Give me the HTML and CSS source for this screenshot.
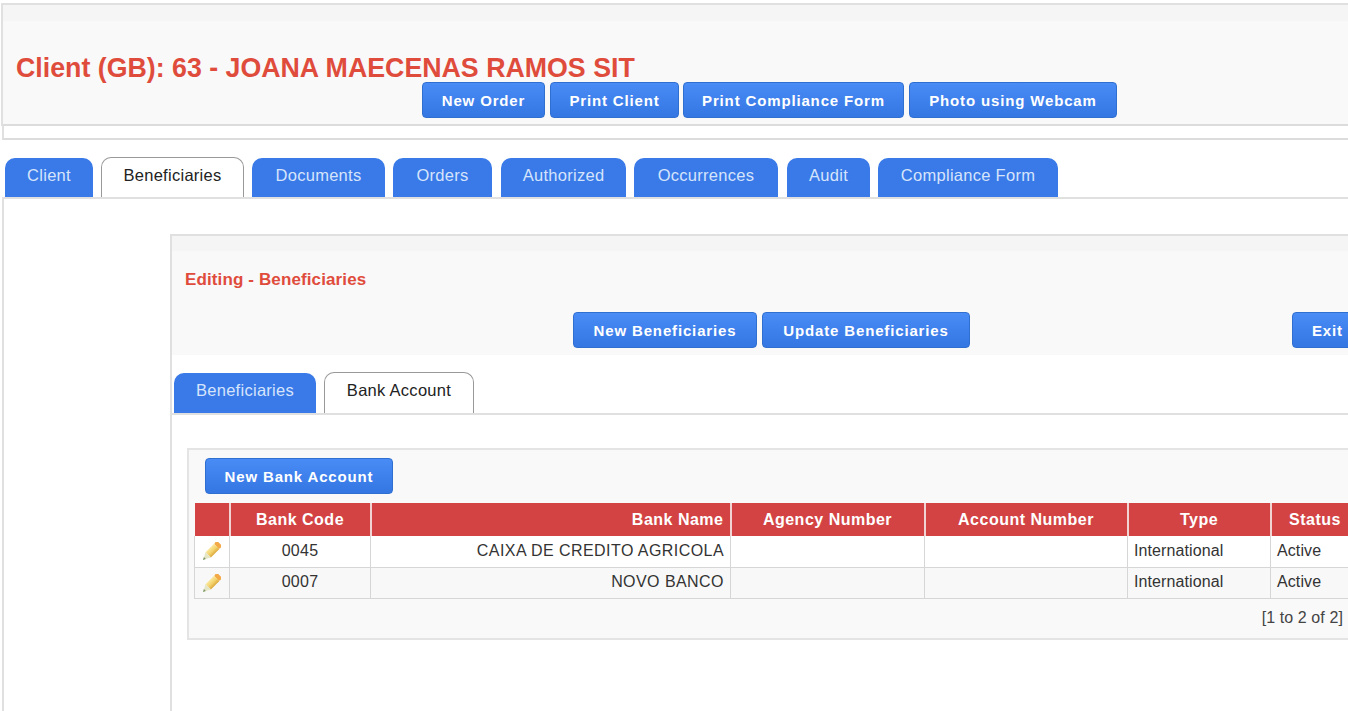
FILE: index.html
```html
<!DOCTYPE html>
<html lang="en">
<head>
<meta charset="utf-8">
<title>Client</title>
<link rel="stylesheet" href="styles.css">
</head>
<body>
<svg class="defs" width="0" height="0" aria-hidden="true">
  <defs>
    <linearGradient id="pbody" x1="0" y1="0" x2="1" y2="0">
      <stop offset="0" stop-color="#fbe9a0"/>
      <stop offset=".55" stop-color="#f3d26a"/>
      <stop offset="1" stop-color="#dca93c"/>
    </linearGradient>
    <symbol id="pencil" viewBox="0 0 20 20">
      <g transform="rotate(45 10 10)">
        <rect x="6.2" y="-2.2" width="7.6" height="4.4" rx="1.8" fill="#f3a948"/>
        <rect x="6.2" y="2" width="7.6" height="12" fill="url(#pbody)"/>
        <path d="M6.2 14h7.6L10 21z" fill="#e4e6c6"/>
        <path d="M8.6 18.6h2.8L10 21.4z" fill="#7f9a66"/>
      </g>
    </symbol>
  </defs>
</svg>
<div class="page">
  <section class="panel main-panel">
    <div class="panel-bar"></div>
    <div class="panel-head main-head">
      <h1 class="client-title">Client (GB): 63 - JOANA MAECENAS RAMOS SIT</h1>
      <div class="toolbar main-toolbar">
        <button class="btn btn-order">New Order</button>
        <button class="btn btn-print">Print Client</button>
        <button class="btn btn-form">Print Compliance Form</button>
        <button class="btn btn-photo">Photo using Webcam</button>
      </div>
    </div>
  </section>
  <div class="spacer-box"></div>
  <nav class="tabs main-tabs">
    <a class="tab tab-client">Client</a>
    <a class="tab active tab-benef">Beneficiaries</a>
    <a class="tab tab-docs">Documents</a>
    <a class="tab tab-orders">Orders</a>
    <a class="tab tab-auth">Authorized</a>
    <a class="tab tab-occ">Occurrences</a>
    <a class="tab tab-audit">Audit</a>
    <a class="tab tab-comp">Compliance Form</a>
  </nav>
  <div class="tab-body">
    <section class="panel inner-panel">
      <div class="panel-bar inner-bar"></div>
      <div class="panel-head inner-head">
        <h2 class="edit-title">Editing - Beneficiaries</h2>
        <div class="toolbar inner-toolbar">
          <button class="btn btn-newb">New Beneficiaries</button>
          <button class="btn btn-upd">Update Beneficiaries</button>
          <button class="btn btn-exit">Exit</button>
        </div>
      </div>
      <nav class="tabs inner-tabs">
        <a class="tab tab-ib">Beneficiaries</a>
        <a class="tab active tab-ibank">Bank Account</a>
      </nav>
      <div class="inner-body">
        <div class="grid-box">
          <div class="grid-tools"><button class="btn btn-bank">New Bank Account</button></div>
          <table class="grid">
            <colgroup>
              <col class="c-edit"><col class="c-code"><col class="c-name"><col class="c-agency"><col class="c-acct"><col class="c-type"><col class="c-status">
            </colgroup>
            <thead>
              <tr><th></th><th>Bank Code</th><th class="right">Bank Name</th><th>Agency Number</th><th>Account Number</th><th>Type</th><th>Status</th></tr>
            </thead>
            <tbody>
              <tr>
                <td class="edit"><svg class="pencil" width="20" height="20"><use href="#pencil"/></svg></td>
                <td class="center">0045</td><td class="right caps">CAIXA DE CREDITO AGRICOLA</td><td></td><td></td><td>International</td><td>Active</td>
              </tr>
              <tr class="alt">
                <td class="edit"><svg class="pencil" width="20" height="20"><use href="#pencil"/></svg></td>
                <td class="center">0007</td><td class="right caps">NOVO BANCO</td><td></td><td></td><td>International</td><td>Active</td>
              </tr>
            </tbody>
          </table>
          <div class="grid-foot">[1 to 2 of 2]</div>
        </div>
      </div>
    </section>
  </div>
</div>
</body>
</html>
```
FILE: styles.css
```css
* { box-sizing: border-box; }
html, body { margin: 0; padding: 0; height: 711px; overflow: hidden; background: #fff; }
body { font-family: "Liberation Sans", Arial, sans-serif; color: #222; }
.defs { position: absolute; }
.page { width: 1420px; padding: 3px 0 0 1px; }

.panel { border: 2px solid #e0e0e0; border-right: 0; }
.main-panel { border-bottom: 0; }
.panel-bar { height: 16px; background: #f5f5f5; }
.inner-bar { height: 15px; }
.panel-head { background: #f9f9fa; }
.main-head { height: 105px; padding: 32px 0 0 13px; border-bottom: 2px solid #dcdcdc; }
.client-title { margin: 0; font-size: 26.75px; line-height: 31px; font-weight: 700; color: #e04c3c; }
.toolbar { display: flex; gap: 5px; }
.main-toolbar { margin: -2px 0 0 406px; }

.btn {
  height: 36px; padding: 0; border: 1px solid #2f6fd0; border-radius: 4px;
  background: linear-gradient(#4a8cf6, #3476e2); color: #fff;
  font: 700 15px/1 "Liberation Sans", Arial, sans-serif; letter-spacing: .85px; white-space: nowrap;
}
.btn-order { width: 123px; }
.btn-print { width: 129px; }
.btn-form { width: 221px; margin-left: -1px; }
.btn-photo { width: 208px; }
.btn-newb { width: 184px; }
.btn-upd { width: 208px; }
.btn-exit { margin-left: 317px; width: 80px; padding-left: 19px; text-align: left; }
.btn-bank { width: 188px; }

.spacer-box { height: 14px; margin-left: 1px; border-left: 2px solid #e0e0e0; border-bottom: 2px solid #dcdcdc; }

.tabs { display: flex; }
.main-tabs { gap: 8px; padding: 18px 0 0 4px; height: 57px; }
.tab {
  display: block; height: 39px; border-radius: 10px 10px 0 0; background: #397ae8;
  color: #d6e4fb; font-size: 16.5px; letter-spacing: .28px; line-height: 34px; text-align: center;
}
.tab.active {
  height: 40px; margin-top: -1px; background: #fff; color: #222;
  border: 1px solid #999; border-bottom: 0;
}
.tab-client { width: 88px; }
.tab-benef { width: 143px; }
.tab-docs { width: 133px; }
.tab-orders { width: 99px; margin-right: 1px; }
.tab-auth { width: 125px; }
.tab-occ { width: 144px; margin-right: 1px; }
.tab-audit { width: 83px; }
.tab-comp { width: 180px; }

.tab-body {
  height: 520px; margin-left: 1px; padding: 35px 0 0 166px;
  border-top: 2px solid #e0e0e0; border-left: 2px solid #e0e0e0;
}
.inner-panel { border-bottom: 0; height: 480px; }
.inner-head { height: 104px; padding: 20px 0 0 13px; }
.edit-title { margin: 0; font-size: 17px; letter-spacing: .12px; line-height: 18px; font-weight: 700; color: #e04c3c; }
.inner-toolbar { margin: 23px 0 0 388px; }

.inner-tabs { gap: 8px; padding: 18px 0 0 2px; height: 58px; }
.inner-tabs .tab { height: 40px; }
.inner-tabs .tab.active { height: 41px; }
.tab-ib { width: 142px; }
.tab-ibank { width: 150px; }

.inner-body { padding: 33px 0 0 15px; border-top: 2px solid #e0e0e0; }
.grid-box {
  height: 192px; padding: 0 0 0 5px; background: #f9f9f9;
  border: 2px solid #e4e4e4; border-right: 0;
}
.grid-tools { padding: 8px 0 0 11px; height: 53px; }
.grid { border-collapse: collapse; table-layout: fixed; width: 1164px; font-size: 16px; letter-spacing: .1px; }
.c-edit { width: 35px; }
.c-code { width: 141px; }
.c-name { width: 360px; }
.c-agency { width: 194px; }
.c-acct { width: 203px; }
.c-type { width: 143px; }
.c-status { width: 88px; }
.grid th {
  height: 33px; padding: 0 6px; background: #d34343; color: #fff;
  font-size: 16px; font-weight: 700; letter-spacing: .5px; text-align: center;
  border-left: 2px solid #f1d3d3;
}
.grid th:first-child { border-left: 0; }
.grid th.right { text-align: right; }
.grid td {
  height: 31px; padding: 0 6px; background: #fff; color: #333;
  border: 1px solid #d6d6d6; border-top: 0; white-space: nowrap;
}
.grid tr.alt td { background: #f8f8f8; padding-bottom: 2px; }
.grid td.center { text-align: center; letter-spacing: .25px; }
.grid td.right { text-align: right; }
.grid td.caps { letter-spacing: .44px; }
.grid td.edit { padding: 2px 0 0 6px; }
.grid tr.alt td.edit { padding-bottom: 0; }
.pencil { display: block; }
.grid-foot { width: 1149px; padding-top: 10px; text-align: right; font-size: 16px; letter-spacing: .1px; color: #444; }
```
